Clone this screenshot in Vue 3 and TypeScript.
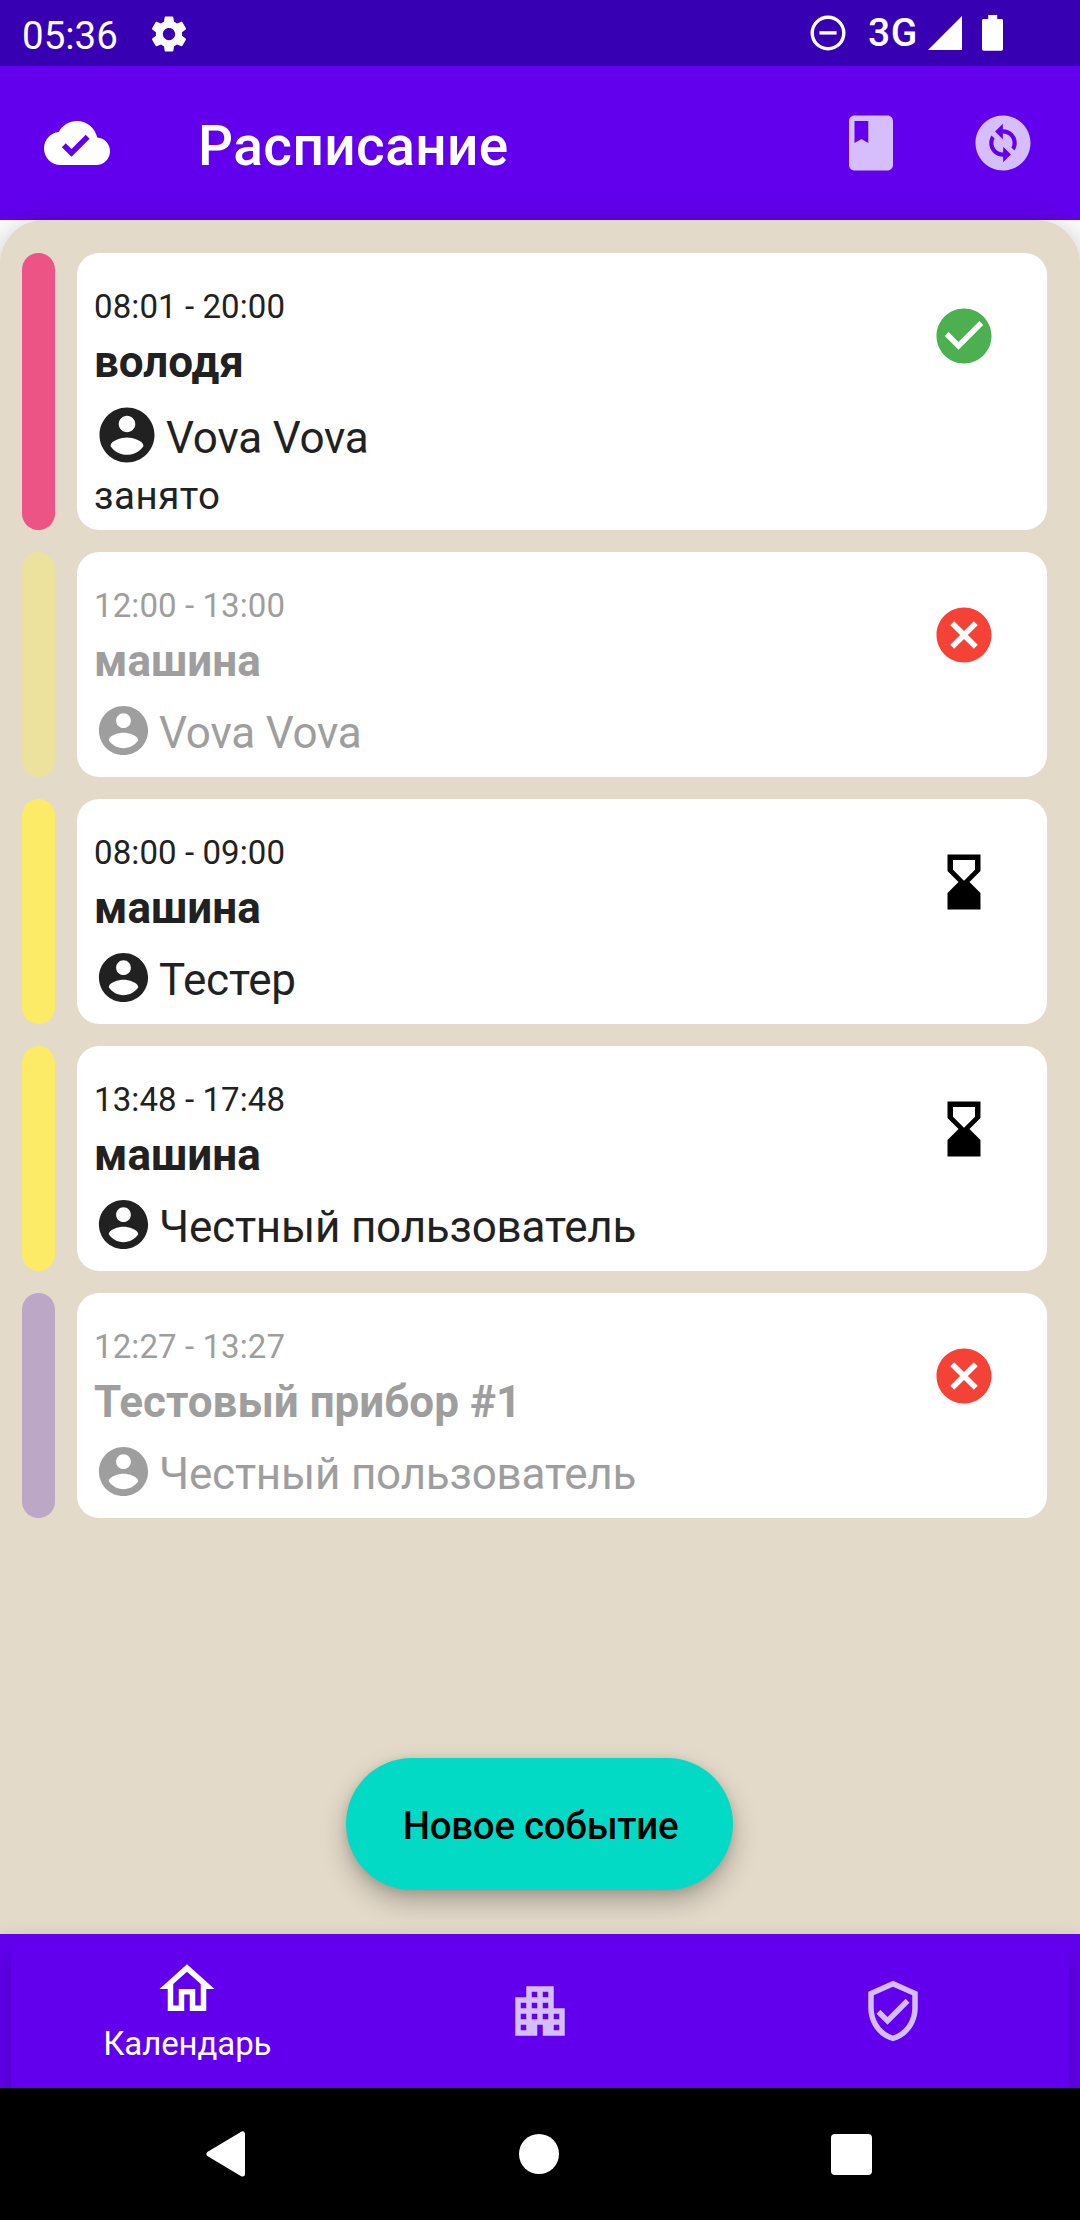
<script setup lang="ts">
type Status = 'approved' | 'rejected' | 'pending'

interface ScheduleEvent {
  time: string
  title: string
  author: string
  comment?: string
  status: Status
  color: string
}

const events: ScheduleEvent[] = [
  { time: '08:01 - 20:00', title: 'володя', author: 'Vova Vova', comment: 'занято', status: 'approved', color: '#ec407a' },
  { time: '12:00 - 13:00', title: 'машина', author: 'Vova Vova', status: 'rejected', color: '#ffee58' },
  { time: '08:00 - 09:00', title: 'машина', author: 'Тестер', status: 'pending', color: '#ffee58' },
  { time: '13:48 - 17:48', title: 'машина', author: 'Честный пользователь', status: 'pending', color: '#ffee58' },
  { time: '12:27 - 13:27', title: 'Тестовый прибор #1', author: 'Честный пользователь', status: 'rejected', color: '#7e57c2' },
]

const statusIcons: Record<Status, { path: string; color: string }> = {
  approved: {
    path: 'M12 2C6.48 2 2 6.48 2 12s4.48 10 10 10 10-4.48 10-10S17.52 2 12 2zm-2 15l-5-5 1.41-1.41L10 14.17l7.59-7.59L19 8l-9 9z',
    color: '#4caf50',
  },
  rejected: {
    path: 'M12 2C6.47 2 2 6.47 2 12s4.47 10 10 10 10-4.47 10-10S17.53 2 12 2zm5 13.59L15.59 17 12 13.41 8.41 17 7 15.59 10.59 12 7 8.41 8.41 7 12 10.59 15.59 7 17 8.41 13.41 12 17 15.59z',
    color: '#f44336',
  },
  pending: {
    path: 'M18 22l-.01-6L14 12l3.99-4.01L18 2H6v6l4 4-4 3.99V22h12zM8 7.5V4h8v3.5l-4 4-4-4z',
    color: '#000000',
  },
}

const accountPath =
  'M12 2C6.48 2 2 6.48 2 12s4.48 10 10 10 10-4.48 10-10S17.52 2 12 2zm0 3c1.66 0 3 1.34 3 3s-1.34 3-3 3-3-1.34-3-3 1.34-3 3-3zm0 14.2c-2.5 0-4.71-1.28-6-3.22.03-1.99 4-3.08 6-3.08 1.99 0 5.97 1.09 6 3.08-1.29 1.94-3.5 3.22-6 3.22z'
</script>

<template>
  <div class="screen">
    <div class="status-bar">
      <span class="clock">05:36</span>
      <svg class="gear" viewBox="0 0 24 24"><path d="M19.43 12.98c.04-.32.07-.64.07-.98s-.03-.66-.07-.98l2.11-1.65c.19-.15.24-.42.12-.64l-2-3.46c-.12-.22-.39-.3-.61-.22l-2.49 1c-.52-.4-1.08-.73-1.69-.98l-.38-2.65C14.46 2.18 14.25 2 14 2h-4c-.25 0-.46.18-.49.42l-.38 2.65c-.61.25-1.17.59-1.69.98l-2.49-1c-.23-.09-.49 0-.61.22l-2 3.46c-.13.22-.07.49.12.64l2.11 1.65c-.04.32-.07.65-.07.98s.03.66.07.98l-2.11 1.65c-.19.15-.24.42-.12.64l2 3.46c.12.22.39.3.61.22l2.49-1c.52.4 1.08.73 1.69.98l.38 2.65c.03.24.24.42.49.42h4c.25 0 .46-.18.49-.42l.38-2.65c.61-.25 1.17-.59 1.69-.98l2.49 1c.23.09.49 0 .61-.22l2-3.46c.12-.22.07-.49-.12-.64l-2.11-1.65zM12 15.5c-1.93 0-3.5-1.57-3.5-3.5s1.57-3.5 3.5-3.5 3.5 1.57 3.5 3.5-1.57 3.5-3.5 3.5z" /></svg>
      <span class="spacer"></span>
      <svg class="dnd" viewBox="0 0 36 36">
        <circle cx="18" cy="18" r="15.8" fill="none" stroke="#fff" stroke-width="3.4" />
        <rect x="9.4" y="16.2" width="17.2" height="3.4" />
      </svg>
      <span class="network">3G</span>
      <svg class="signal" viewBox="0 0 34 34"><path d="M34 0v34H0z" /></svg>
      <svg class="battery" viewBox="0 0 21 36"><path d="M6.2 0h9v4h4.3c.9 0 1.5.6 1.5 1.5v28.500c0 1-.7 1.700-1.700 1.700H1.700C.7 35.700 0 35 0 34V5.500C0 4.600.6 4 1.500 4h4.700z" /></svg>
    </div>

    <header class="app-bar">
      <svg class="icon" viewBox="0 0 24 24"><path d="M19.35 10.04C18.67 6.59 15.64 4 12 4 9.11 4 6.6 5.64 5.35 8.04 2.34 8.36 0 10.91 0 14c0 3.31 2.69 6 6 6h13c2.76 0 5-2.24 5-5 0-2.64-2.05-4.78-4.65-4.96zM10 17l-3.5-3.5 1.41-1.41L10 14.17 15.18 9l1.41 1.41L10 17z" /></svg>
      <h1 class="app-title">Расписание</h1>
      <svg class="icon dim book" viewBox="0 0 24 24"><path d="M18 2H6c-1.1 0-2 .9-2 2v16c0 1.1.9 2 2 2h12c1.1 0 2-.9 2-2V4c0-1.1-.9-2-2-2zM6 4h5v8l-2.5-1.5L6 12V4z" /></svg>
      <svg class="icon dim" viewBox="0 0 24 24"><path d="M12 2C6.48 2 2 6.48 2 12s4.48 10 10 10 10-4.48 10-10S17.52 2 12 2zm.06 17v-2.01H12c-1.28 0-2.56-.49-3.54-1.46-1.71-1.71-1.92-4.35-.64-6.29l1.1 1.1c-.71 1.33-.53 3.01.59 4.13.7.7 1.62 1.03 2.54 1.01v-2.14l2.83 2.83L12.06 19zm4.11-4.24l-1.1-1.1c.71-1.33.53-3.01-.59-4.13C13.79 8.84 12.9 8.5 12 8.5h-.06v2.15L9.11 7.83 11.94 5v2.02c1.3-.02 2.61.45 3.6 1.45 1.7 1.7 1.91 4.35.63 6.29z" /></svg>
    </header>

    <main class="content">
      <section class="panel">
        <article
          v-for="(event, i) in events"
          :key="i"
          class="event"
          :class="{ disabled: event.status === 'rejected', commented: event.comment }"
        >
          <div class="stripe" :style="{ backgroundColor: event.color }"></div>
          <div class="card">
            <div class="details">
              <div class="time">{{ event.time }}</div>
              <div class="title">{{ event.title }}</div>
              <div class="author">
                <svg class="avatar" viewBox="0 0 24 24"><path :d="accountPath" /></svg>
                <span>{{ event.author }}</span>
              </div>
              <div v-if="event.comment" class="comment">{{ event.comment }}</div>
            </div>
            <svg class="state" viewBox="0 0 24 24" :fill="statusIcons[event.status].color">
              <path :d="statusIcons[event.status].path" />
            </svg>
          </div>
        </article>
        <button class="fab" type="button">Новое событие</button>
      </section>
    </main>

    <nav class="bottom-nav">
      <div class="tabs">
        <div class="tab active">
          <svg class="icon" viewBox="0 0 24 24"><path d="M12 5.69l5 4.5V18h-2v-6H9v6H7v-7.81l5-4.5M12 3L2 12h3v8h6v-6h2v6h6v-8h3L12 3z" /></svg>
          <span>Календарь</span>
        </div>
        <div class="tab">
          <svg class="icon dim" viewBox="0 0 24 24"><path d="M17 11V3H7v4H3v14h8v-4h2v4h8V11h-4zM7 19H5v-2h2v2zm0-4H5v-2h2v2zm0-4H5V9h2v2zm4 4H9v-2h2v2zm0-4H9V9h2v2zm0-4H9V5h2v2zm4 8h-2v-2h2v2zm0-4h-2V9h2v2zm0-4h-2V5h2v2zm4 12h-2v-2h2v2zm0-4h-2v-2h2v2z" /></svg>
        </div>
        <div class="tab">
          <svg class="icon dim" viewBox="0 0 24 24"><path d="M12 1L3 5v6c0 5.55 3.84 10.74 9 12 5.16-1.26 9-6.45 9-12V5l-9-4zm7 10c0 4.52-2.98 8.69-7 9.93-4.02-1.24-7-5.41-7-9.93V6.3l7-3.11 7 3.11V11zm-11.59.59L6 13l4 4 8-8-1.41-1.42L10 14.17z" /></svg>
        </div>
      </div>
    </nav>

    <div class="system-nav">
      <svg class="back" viewBox="0 0 40 46"><path d="M36.500 3v40L3 23z" fill="#fff" stroke="#fff" stroke-width="5" stroke-linejoin="round" /></svg>
      <div class="home"></div>
      <div class="recents"></div>
    </div>
  </div>
</template>

<style>
body {
  margin: 0;
}
</style>

<style scoped>
.screen {
  width: 1080px;
  height: 2220px;
  display: flex;
  flex-direction: column;
  overflow: hidden;
  font-family: Roboto, "Noto Sans", sans-serif;
  background: #fff;
}

svg {
  display: block;
  flex: none;
}

.status-bar {
  box-sizing: border-box;
  height: 66px;
  padding: 0 77px 0 22px;
  display: flex;
  align-items: flex-start;
  background: #3700b3;
  color: #fff;
  fill: #fff;
}

.clock {
  width: 125.5px;
  font-size: 38.5px;
  line-height: 71px;
}

.gear {
  width: 42px;
  height: 42px;
  margin-top: 12.5px;
}

.spacer {
  flex: 1;
}

.dnd {
  width: 36px;
  height: 36px;
  margin-top: 14.5px;
}

.network {
  width: 49px;
  margin: 0 11px 0 22px;
  font-size: 39px;
  font-weight: 500;
  letter-spacing: 0.5px;
  line-height: 66px;
}

.signal {
  width: 34px;
  height: 34px;
  margin-top: 16px;
}

.battery {
  width: 21px;
  height: 36px;
  margin: 15px 0 0 20px;
}

.app-bar {
  box-sizing: border-box;
  height: 154px;
  padding: 0 44px;
  display: flex;
  align-items: center;
  background: #6200ee;
}

.icon {
  width: 66px;
  height: 66px;
  fill: #fff;
}

.icon.dim {
  fill: rgba(255, 255, 255, 0.74);
}

.app-title {
  flex: 1;
  margin: 0 0 0 88px;
  font-size: 55px;
  font-weight: 500;
  line-height: 60px;
  padding-top: 6px;
  letter-spacing: 0.41px;
  color: #fff;
}

.book {
  margin-right: 66px;
}

.content {
  height: 1714px;
  position: relative;
}

.panel {
  box-sizing: border-box;
  height: 1714px;
  padding: 33px 33px 0 22px;
  display: flex;
  flex-direction: column;
  gap: 22px;
  border-radius: 44px 44px 0 0;
  background: #e3dac9;
  box-shadow: 0 6px 34px rgba(0, 0, 0, 0.26);
}

.event {
  height: 225px;
  display: flex;
  gap: 22px;
  color: #212121;
}

.event.commented {
  height: 277px;
}

.event.disabled {
  color: #9e9e9e;
}

.stripe {
  width: 33px;
  border-radius: 17px;
  opacity: 0.87;
}

.disabled .stripe {
  opacity: 0.38;
}

.card {
  flex: 1;
  display: flex;
  justify-content: space-between;
  padding: 0 50px 0 17px;
  border-radius: 22px;
  background: #fff;
}

.details {
  padding-top: 32px;
}

.time {
  font-size: 33px;
  line-height: 44px;
  letter-spacing: 0.1px;
}

.title {
  margin-top: 5px;
  font-size: 44px;
  font-weight: 700;
  line-height: 56px;
}

.author {
  height: 59px;
  margin-top: 12px;
  display: flex;
  gap: 6px;
  font-size: 44px;
  line-height: 64px;
  letter-spacing: -0.2px;
}

.avatar {
  width: 59px;
  height: 59px;
  fill: currentColor;
}

.commented .author {
  height: 66px;
  line-height: 72px;
}

.commented .avatar {
  width: 66px;
  height: 66px;
}

.comment {
  margin-top: 6px;
  font-size: 38.5px;
  line-height: 44px;
  letter-spacing: 0.5px;
}

.state {
  width: 66px;
  height: 66px;
  margin-top: 50px;
}

.fab {
  position: absolute;
  left: 346px;
  bottom: 44px;
  width: 387px;
  height: 132px;
  padding: 3px 0 0 2px;
  border: 0;
  border-radius: 66px;
  background: #03dac5;
  color: #000;
  font-family: inherit;
  font-size: 38.5px;
  font-weight: 500;
  letter-spacing: -0.3px;
  white-space: nowrap;
  box-shadow: 0 12px 26px rgba(0, 0, 0, 0.26), 0 2px 10px rgba(0, 0, 0, 0.1);
}

.bottom-nav {
  height: 154px;
  padding: 0 11px;
  position: relative;
  background: #6200ee;
  box-shadow: 0 0 14px rgba(0, 0, 0, 0.09);
}

.tabs {
  height: 154px;
  display: flex;
  background: #6200ee;
  box-shadow: 0 22px 22px rgba(0, 0, 0, 0.22);
}

.tab {
  flex: 1;
  display: flex;
  flex-direction: column;
  align-items: center;
  justify-content: center;
  color: #fff;
  font-size: 33px;
  line-height: 44px;
  letter-spacing: -0.1px;
}

.tab.active {
  justify-content: flex-start;
  padding-top: 22px;
}

.system-nav {
  box-sizing: border-box;
  height: 132px;
  padding: 0 208px 0 206px;
  position: relative;
  display: flex;
  justify-content: space-between;
  align-items: center;
  background: #000;
}

.back {
  width: 40px;
  height: 46px;
}

.home {
  width: 40px;
  height: 40px;
  border-radius: 50%;
  background: #fff;
}

.recents {
  width: 41px;
  height: 41px;
  border-radius: 4px;
  background: #fff;
}
</style>
